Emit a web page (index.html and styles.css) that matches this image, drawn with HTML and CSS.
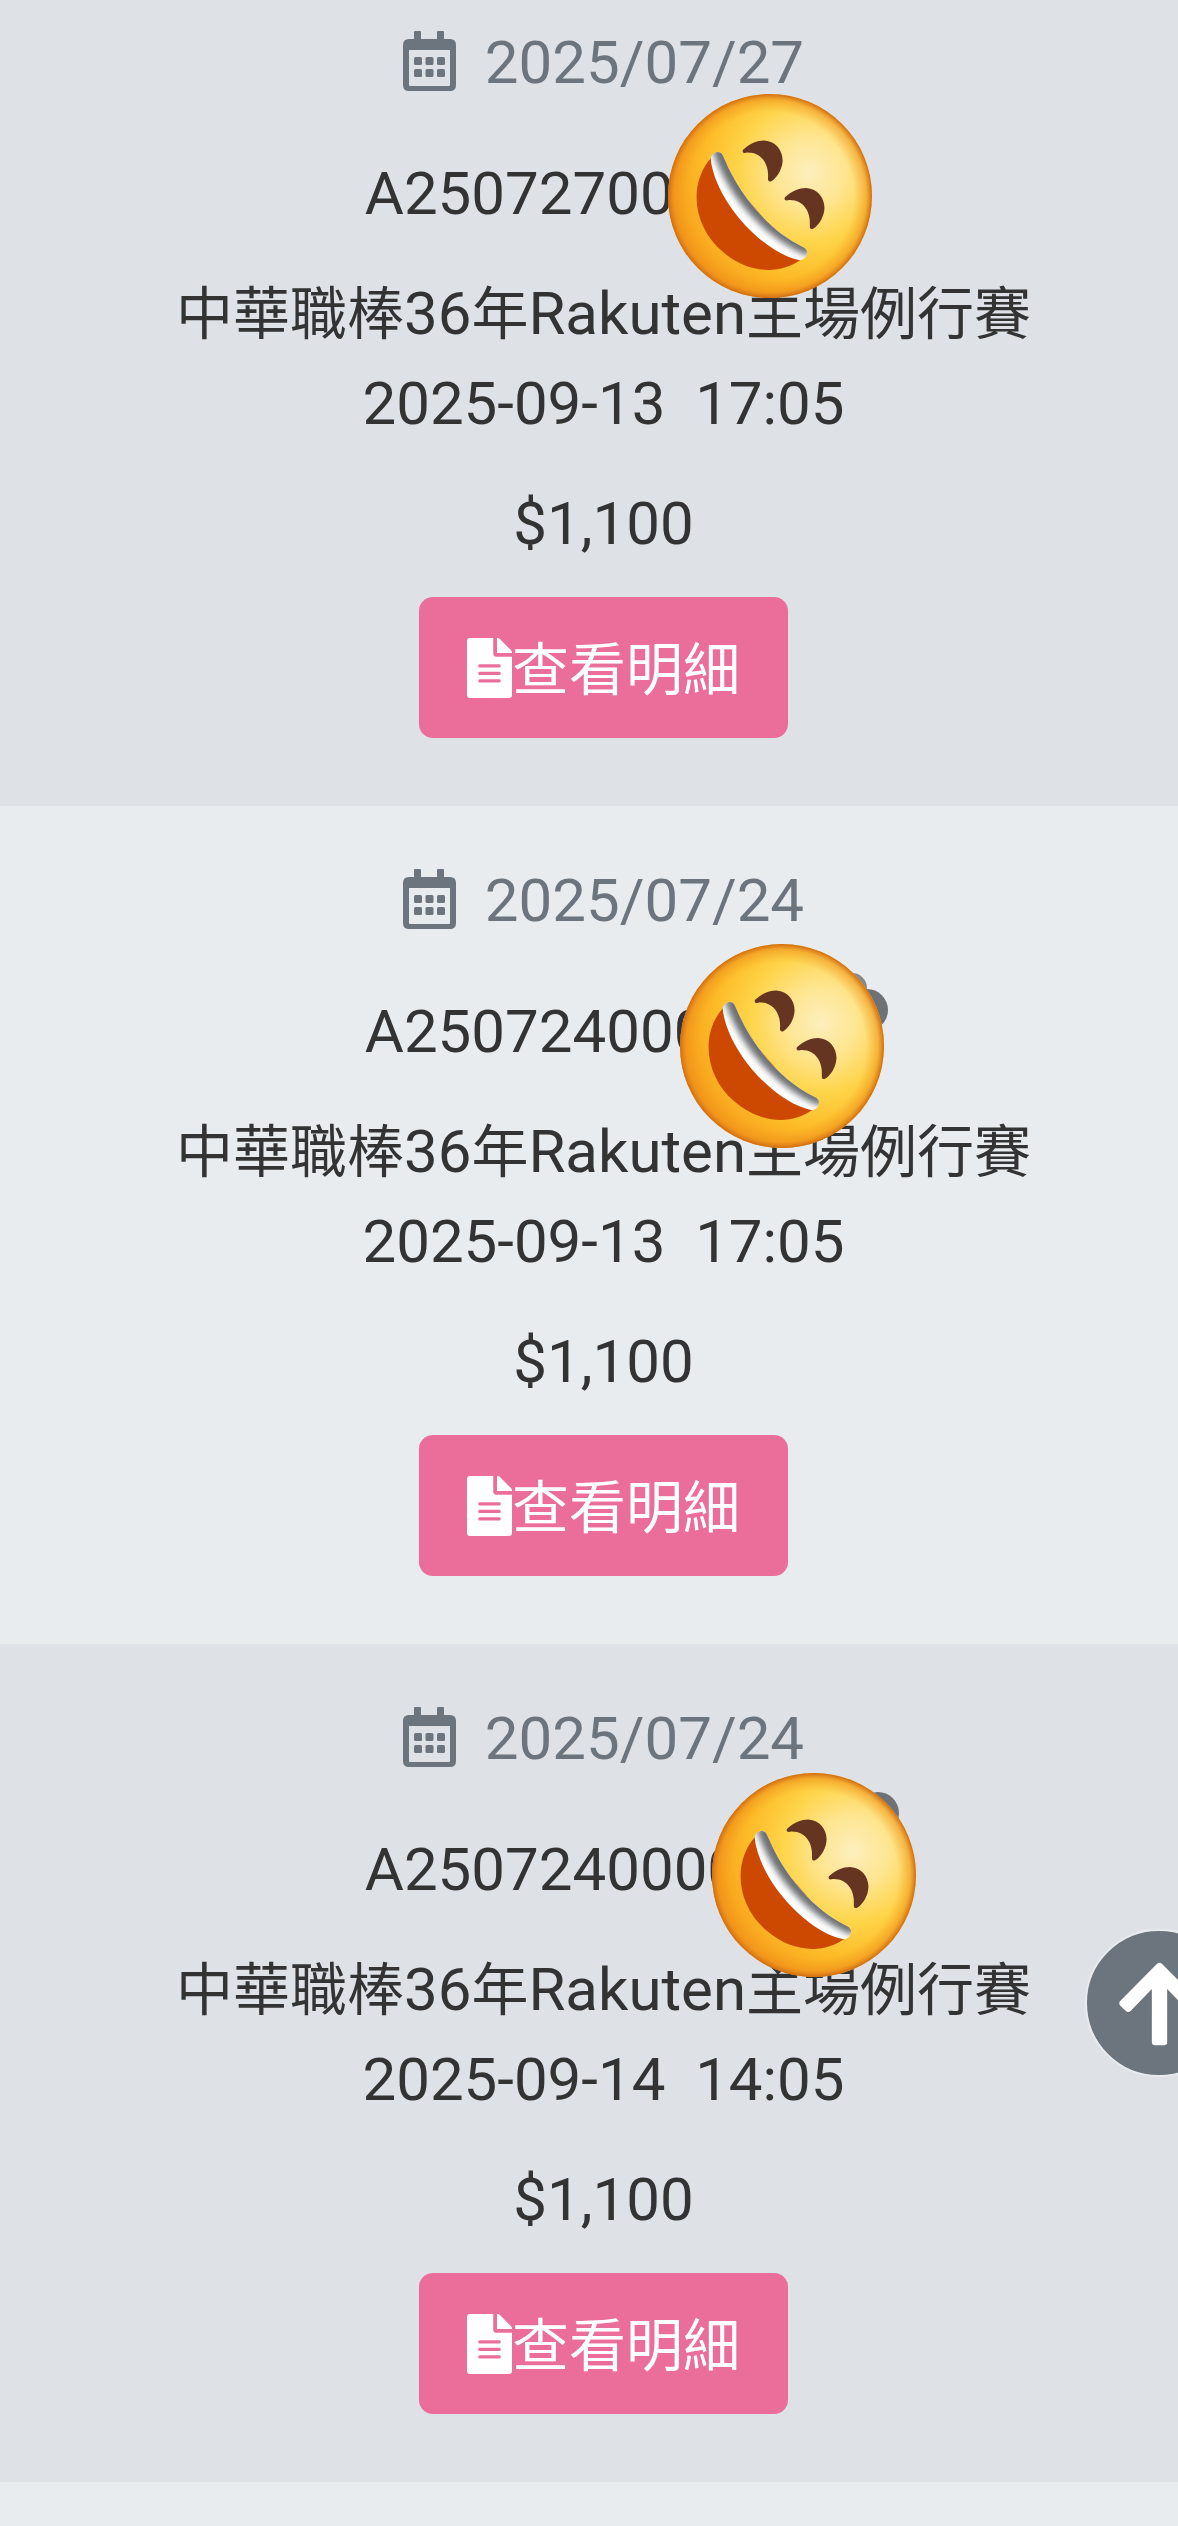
FILE: index.html
```html
<!DOCTYPE html>
<html lang="zh-Hant">
<head>
  <meta charset="UTF-8" />
  <meta name="viewport" content="width=device-width, initial-scale=1" />
  <title>訂單查詢</title>
  <link rel="stylesheet" href="styles.css">
</head>
<body>

<!-- shared icons -->
<svg class="sprite" aria-hidden="true">
  <defs>
    <radialGradient id="face" gradientUnits="userSpaceOnUse" cx="425" cy="235" r="430">
      <stop offset="0" stop-color="#fdefbd" />
      <stop offset="0.25" stop-color="#fee590" />
      <stop offset="0.5" stop-color="#fed448" />
      <stop offset="0.75" stop-color="#fdbb27" />
      <stop offset="1" stop-color="#f69a19" />
    </radialGradient>
    <radialGradient id="rim">
      <stop offset="0.82" stop-color="#f09a20" stop-opacity="0" />
      <stop offset="0.94" stop-color="#ec8e1c" stop-opacity="0.5" />
      <stop offset="1" stop-color="#cf6c12" />
    </radialGradient>
    <filter id="soft" x="-20%" y="-20%" width="140%" height="140%">
      <feGaussianBlur stdDeviation="9" />
    </filter>
    <clipPath id="teeth">
      <path d="M128 195C132 180 142 173 154 175C163 177 165 184 170 196C220 315 310 415 407 461C419 467 422 477 416 487C411 497 404 500 396 500C290 480 145 330 128 195Z" />
    </clipPath>
  </defs>

  <symbol id="icon-calendar" viewBox="0 0 53 60">
    <path fill-rule="evenodd" d="M11 8V1Q11 0 12 0H17Q18 0 18 1V8H34V1Q34 0 35 0H40Q41 0 41 1V8H47Q53 8 53 14V54Q53 60 47 60H6Q0 60 0 54V14Q0 8 6 8ZM6 19V54Q6 55 7 55H46Q47 55 47 54V19Z" />
    <rect x="11" y="26" width="8" height="8" rx="1.5" />
    <rect x="22.500" y="26" width="8" height="8" rx="1.5" />
    <rect x="34" y="26" width="8" height="8" rx="1.5" />
    <rect x="11" y="38" width="8" height="8" rx="1.5" />
    <rect x="22.500" y="38" width="8" height="8" rx="1.5" />
    <rect x="34" y="38" width="8" height="8" rx="1.5" />
  </symbol>

  <symbol id="icon-file" viewBox="0 0 384 512">
    <path fill-rule="evenodd" d="M224 136V0H24C10.700 0 0 10.700 0 24v464c0 13.300 10.700 24 24 24h336c13.300 0 24-10.700 24-24V160H248c-13.200 0-24-10.800-24-24zM108 224H276Q288 224 288 238T276 252H108Q96 252 96 238T108 224zM108 288H276Q288 288 288 302T276 316H108Q96 316 96 302T108 288zM108 352H276Q288 352 288 366T276 380H108Q96 380 96 366T108 352zM384 122v6H256V0h6c6.400 0 12.500 2.500 17 7l98 98c4.500 4.500 7 10.600 7 17z" />
  </symbol>

  <symbol id="icon-arrow" viewBox="-130 -130 260 270">
    <path d="M-8-112Q0-120 8-112L118-1Q124 6 117 14L101 29Q94 35 86 28L23-37V122Q23 132 13 132H-13Q-23 132-23 122V-37L-86 28Q-94 35-101 29L-117 14Q-124 6-118-1Z" />
  </symbol>

  <symbol id="icon-laugh" viewBox="0 0 614 614">
    <circle cx="307" cy="307" r="307" fill="url(#face)" />
    <circle cx="307" cy="307" r="307" fill="url(#rim)" />
    <path d="M130 192C60 270 75 400 165 475C240 540 335 545 398 500Z" fill="#cd4902" />
    <g clip-path="url(#teeth)">
      <rect x="100" y="150" width="340" height="370" fill="#fff" />
      <path d="M154 160C202 308 312 418 430 468" fill="none" stroke="#6d7072" stroke-width="44" filter="url(#soft)" />
    </g>
    <g fill="#663522">
      <path d="M226 168C248 148 268 140 290 140C325 142 345 170 345 200C344 225 330 250 312 262C305 266 300 262 301 254C304 215 285 175 238 176C228 180 222 175 226 168Z" />
      <path d="M352 311C374 291 394 283 416 283C451 285 471 313 471 343C470 368 456 393 438 405C431 409 426 405 427 397C430 358 411 318 364 319C354 323 348 318 352 311Z" />
    </g>
  </symbol>
</svg>

<main class="orders">
  <section class="order">
    <div class="order-date">
      <svg class="icon-calendar" aria-hidden="true"><use href="#icon-calendar" /></svg>
      <time datetime="2025-07-27">2025/07/27</time>
    </div>
    <div class="order-id">A2507270000000
      <svg class="sticker sticker-a" aria-hidden="true"><use href="#icon-laugh" /></svg>
    </div>
    <div class="order-event">
      <div><span class="zh">中華職棒</span>36<span class="zh">年</span>Rakuten<span class="zh">主場例行賽</span></div>
      <div>2025-09-13&nbsp; 17:05</div>
    </div>
    <div class="order-price">$1,100</div>
    <a class="btn" href="#"><svg class="icon-file" aria-hidden="true"><use href="#icon-file" /></svg><span class="zh">查看明細</span></a>
  </section>

  <section class="order">
    <div class="order-date">
      <svg class="icon-calendar" aria-hidden="true"><use href="#icon-calendar" /></svg>
      <time datetime="2025-07-24">2025/07/24</time>
    </div>
    <div class="order-id">A2507240000000
      <svg class="sticker sticker-b" aria-hidden="true">
        <circle cx="172" cy="44" r="15" fill="#85898d" />
        <circle cx="187" cy="66" r="21" fill="#6e7275" />
        <use href="#icon-laugh" />
      </svg>
    </div>
    <div class="order-event">
      <div><span class="zh">中華職棒</span>36<span class="zh">年</span>Rakuten<span class="zh">主場例行賽</span></div>
      <div>2025-09-13&nbsp; 17:05</div>
    </div>
    <div class="order-price">$1,100</div>
    <a class="btn" href="#"><svg class="icon-file" aria-hidden="true"><use href="#icon-file" /></svg><span class="zh">查看明細</span></a>
  </section>

  <section class="order">
    <div class="order-date">
      <svg class="icon-calendar" aria-hidden="true"><use href="#icon-calendar" /></svg>
      <time datetime="2025-07-24">2025/07/24</time>
    </div>
    <div class="order-id">A2507240000000
      <svg class="sticker sticker-c" aria-hidden="true">
        <circle cx="166" cy="40" r="21" fill="#6e7275" />
        <use href="#icon-laugh" />
      </svg>
    </div>
    <div class="order-event">
      <div><span class="zh">中華職棒</span>36<span class="zh">年</span>Rakuten<span class="zh">主場例行賽</span></div>
      <div>2025-09-14&nbsp; 14:05</div>
    </div>
    <div class="order-price">$1,100</div>
    <a class="btn" href="#"><svg class="icon-file" aria-hidden="true"><use href="#icon-file" /></svg><span class="zh">查看明細</span></a>
  </section>
</main>

<button class="to-top" type="button" aria-label="回到頂端">
  <svg class="icon-arrow" aria-hidden="true"><use href="#icon-arrow" /></svg>
</button>

<script>
  document.querySelector('.to-top').addEventListener('click', () => {
    window.scrollTo({ top: 0, behavior: 'smooth' });
  });
</script>

</body>
</html>
```
FILE: styles.css
```css
* {
  box-sizing: border-box;
}
body {
  margin: 0;
  font-family: Roboto, 'Noto Sans CJK TC', sans-serif;
  font-size: 60px;
  line-height: 90px;
  color: #333;
  background: #e9ecef;
}
.sprite {
  position: absolute;
  width: 0;
  height: 0;
}
.order {
  display: flex;
  flex-direction: column;
  align-items: center;
  padding: 50px 0 68px 29px;
  text-align: center;
}
.order:first-child {
  padding-top: 18px;
}
.order:nth-child(odd) {
  background: #dee2e6;
}
.order-date {
  margin-bottom: 41px;
  color: #6c757d;
}
.order-id {
  position: relative;
  margin-bottom: 30px;
}
.order-event {
  margin-bottom: 30px;
}
.order-price {
  margin-bottom: 28px;
}
.zh {
  font-size: 57px;
  line-height: 1;
}
.btn {
  padding: 28px 48px 23px;
  border-radius: 14px;
  background: #eb6e9a;
  color: #fff;
  text-decoration: none;
}
.btn:hover {
  background: #e55a8b;
}
.icon-calendar {
  width: 53px;
  height: 60px;
  margin-right: 14px;
  vertical-align: -8px;
  fill: currentColor;
}
.icon-file {
  width: 45px;
  height: 60px;
  vertical-align: -8px;
  fill: currentColor;
}
/* Stickers lie over the order number */
.sticker {
  position: absolute;
  width: 204px;
  height: 204px;
  overflow: visible;
}
.sticker-a {
  top: -55px;
  left: calc(50% + 65px);
}
.sticker-b {
  top: -43px;
  left: calc(50% + 77px);
}
.sticker-c {
  top: -52px;
  left: calc(50% + 109px);
}
/* Back to top, partly off the right edge */
.to-top {
  position: fixed;
  right: -55px;
  bottom: 449px;
  display: flex;
  align-items: center;
  justify-content: center;
  width: 148px;
  height: 148px;
  padding: 0;
  border: 2px solid #e9ecef;
  border-radius: 50%;
  background: #6c757d;
  color: #fff;
  cursor: pointer;
}
.icon-arrow {
  width: 87px;
  height: 90px;
  fill: currentColor;
}
```
